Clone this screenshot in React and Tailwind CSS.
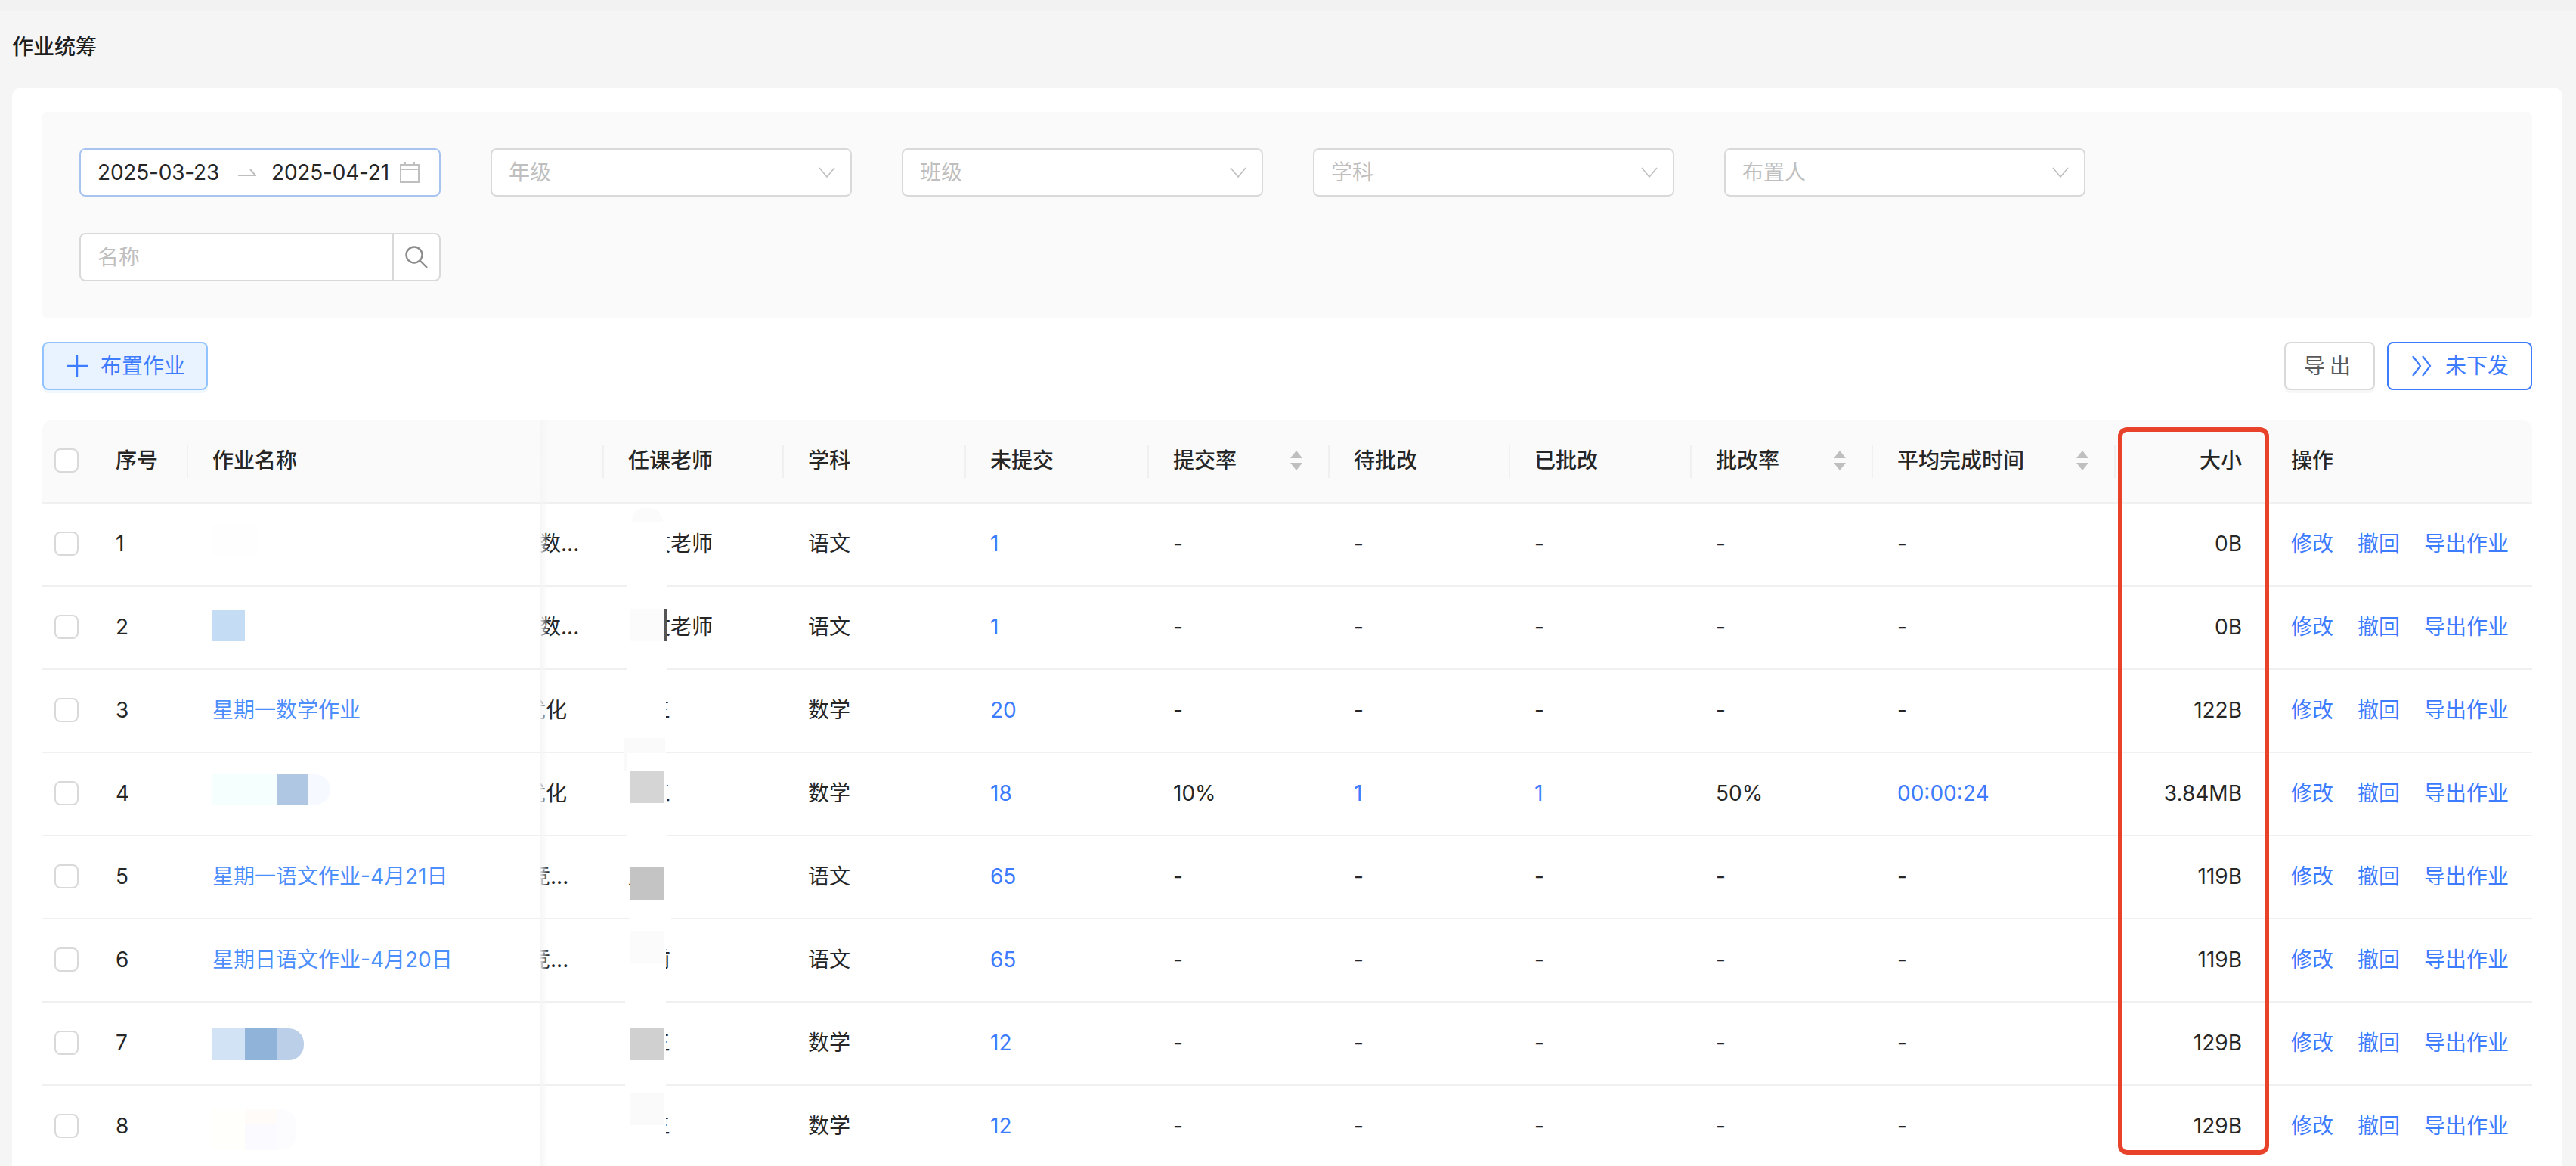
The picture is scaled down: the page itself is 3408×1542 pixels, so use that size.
import React from "react"

const gridCols =
  "grid grid-cols-[72px_119px_467px_83px_238px_241px_242px_239px_239px_240px_240px_321px_201px_352px]"

const rows = [
  { no: 1, blot: "one", subjectClip: "数...", clip: "-ml-0", teacher: "语文老师", cover: "left-[32px] w-[54px]", course: "语文", miss: "1", size: "0B" },
  { no: 2, blot: "two", subjectClip: "数...", clip: "-ml-0", teacher: "语文老师", cover: "left-[32px] w-[54px]", course: "语文", miss: "1", size: "0B" },
  { no: 3, name: "星期一数学作业", subjectClip: "优化", clip: "-ml-[20px]", teacher: "王三", cover: "left-[30px] w-[54px]", course: "数学", miss: "20", size: "122B" },
  { no: 4, blot: "four", subjectClip: "优化", clip: "-ml-[20px]", teacher: "王三", cover: "left-[32px] w-[53px]", course: "数学", miss: "18", rate: "10%", wait: "1", done: "1", fixRate: "50%", time: "00:00:24", size: "3.84MB" },
  { no: 5, name: "星期一语文作业-4月21日", subjectClip: "竞...", clip: "-ml-[14px]", teacher: "周三", cover: "left-[37px] w-[54px]", course: "语文", miss: "65", size: "119B" },
  { no: 6, name: "星期日语文作业-4月20日", subjectClip: "竞...", clip: "-ml-[14px]", teacher: "王前", cover: "left-[30px] w-[54px]", course: "语文", miss: "65", size: "119B" },
  { no: 7, blot: "seven", teacher: "王三", cover: "left-[30px] w-[54px]", course: "数学", miss: "12", size: "129B" },
  { no: 8, blot: "eight", teacher: "王三", cover: "left-[30px] w-[54px]", course: "数学", miss: "12", size: "129B" },
]

// little grey squares left over the teacher's name
const patches = {
  2: <div className="absolute top-[30px] left-[37px] h-[42px] w-[44px] bg-[#fbfbfb]" />,
  3: <div className="absolute top-[90px] left-[29px] h-[44px] w-[54px] bg-[#fafafa]" />,
  4: <div className="absolute top-[24px] left-[37px] h-[42px] w-[44px] bg-[#d5d5d5]" />,
  5: <div className="absolute top-[40px] left-[37px] h-[44px] w-[44px] bg-[#c4c4c4]" />,
  6: <div className="absolute top-[15px] left-[37px] h-[42px] w-[44px] bg-[#fbfbfb]" />,
  7: <div className="absolute top-[34px] left-[37px] h-[42px] w-[44px] bg-[#d0d0d0]" />,
  8: <div className="absolute top-[10px] left-[37px] h-[42px] w-[44px] bg-[#fafafa]" />,
}

function Blot({ kind }) {
  if (kind === "one")
    return <div className="mt-[28px] h-[40px] w-[60px] bg-[#fefefe]" />
  if (kind === "two")
    return <div className="mt-[31px] h-[41px] w-[43px] bg-[#c5dcf5]" />
  if (kind === "four")
    return (
      <div className="mt-[28px] flex h-[40px]">
        <div className="w-[85px] bg-[#f5fffd]" />
        <div className="w-[42px] bg-[#b0c7e3]" />
        <div className="w-[29px] rounded-r-[20px] bg-[#f6f9ff]" />
      </div>
    )
  if (kind === "seven")
    return (
      <div className="mt-[34px] flex h-[42px]">
        <div className="w-[43px] bg-[#d3e3f6]" />
        <div className="w-[42px] bg-[#90b3d9]" />
        <div className="w-[36px] rounded-r-[20px] bg-[#bccfe8]" />
      </div>
    )
  return (
    <div className="mt-[31px] flex h-[54px]">
      <div className="w-[43px] bg-[#fffffb]" />
      <div className="w-[42px]">
        <div className="h-[20px] bg-[#fffbf8]" />
        <div className="h-[34px] bg-[#fbfbff]" />
      </div>
      <div className="w-[26px] rounded-r-[20px] bg-[#fcfcff]" />
    </div>
  )
}

function Chevron() {
  return (
    <svg width="22" height="14" viewBox="0 0 22 14" fill="none" stroke="#bfbfbf" strokeWidth="1.6">
      <path d="M1 1l10 12L21 1" />
    </svg>
  )
}

function SelectBox({ label }) {
  return (
    <div className="flex h-16 w-[478px] items-center justify-between rounded-lg border-2 border-[#d9d9d9] bg-white pr-[20px] pl-[22px] text-[#bfbfbf]">
      <span>{label}</span>
      <Chevron />
    </div>
  )
}

function SortIcon() {
  return (
    <svg width="16" height="26" viewBox="0 0 16 26" fill="#bfbfbf" className="ml-auto">
      <path d="M8 0l8 10H0z" />
      <path d="M8 26l8-10H0z" />
    </svg>
  )
}

function HeadCell({ children, sort, end, pad = "pl-[34px]", line = true }) {
  return (
    <div className={`relative flex items-center ${pad} ${sort ? "pr-[34px]" : ""} ${end ? "justify-end pr-[32px]" : ""}`}>
      {line && <div className="absolute top-[32px] left-0 h-[44px] w-[2px] bg-[#f0f0f0]" />}
      <span>{children}</span>
      {sort && <SortIcon />}
    </div>
  )
}

function Cell({ children, color }) {
  return (
    <div className={`flex items-center pl-[34px] ${color ? "text-[#3d7bff]" : ""}`}>{children}</div>
  )
}

function Row({ r }) {
  return (
    <div className={`${gridCols} h-[110px] border-b-2 border-[#f0f0f0] pb-[2px]`}>
      <div className="flex items-center pl-4">
        <div className="h-8 w-8 rounded-lg border-2 border-[#d9d9d9] bg-white" />
      </div>
      <div className="flex items-center pl-[25px]">{r.no}</div>
      <div className="pl-[34px]">
        {r.name && <div className="flex h-full items-center text-[#4c8efb]">{r.name}</div>}
        {r.blot && <Blot kind={r.blot} />}
      </div>
      <div className="flex items-center overflow-hidden">
        <span className={`whitespace-nowrap ${r.clip || ""}`}>{r.subjectClip}</span>
      </div>
      <div className="relative flex items-center pl-[34px]">
        <span className="whitespace-nowrap">{r.teacher}</span>
        <div className={`absolute top-0 -bottom-[4px] bg-white ${r.cover}`} />
        {r.no === 1 && <div className="absolute top-[6px] left-[39px] h-[18px] w-[41px] rounded-t-full bg-[#fbfbfb]" />}
        {r.no === 2 && <div className="absolute top-[30px] left-[81px] h-[42px] w-[5px] bg-[#555555]" />}
        {patches[r.no]}
      </div>
      <Cell>{r.course}</Cell>
      <Cell color>{r.miss}</Cell>
      <Cell>{r.rate || "-"}</Cell>
      <Cell color={r.wait}>{r.wait || "-"}</Cell>
      <Cell color={r.done}>{r.done || "-"}</Cell>
      <Cell>{r.fixRate || "-"}</Cell>
      <Cell color={r.time}>{r.time || "-"}</Cell>
      <div className="flex items-center justify-end pr-[32px]">{r.size}</div>
      <div className="flex items-center gap-8 pl-[33px] text-[#3d7bff]">
        <span>修改</span>
        <span>撤回</span>
        <span>导出作业</span>
      </div>
    </div>
  )
}

const App = () => {
  return (
    <div className="relative h-[1542px] w-[3408px] overflow-hidden bg-[#f5f5f5] text-[28px] leading-[40px] text-[#262626] [font-family:Inter,'Noto_Sans_CJK_SC',sans-serif]">
      <div className="h-[14px] bg-[#f2f2f2]" />
      <div className="h-[102px] pt-[28px] pl-[16px] font-medium text-[#1f1f1f]">作业统筹</div>

      <div className="mr-[18px] ml-4 h-[1500px] rounded-t-xl bg-white px-10 pt-8">
        <div className="h-[272px] rounded-md bg-[#fafafa] py-12 pl-[49px]">
          <div className="flex gap-[66px]">
            <div className="flex h-16 w-[478px] items-center rounded-lg border-2 border-[#a8c4ee] bg-white pl-[22px] whitespace-nowrap">
              <span className="w-[186px] tracking-[-0.2px]">2025-03-23</span>
              <svg width="24" height="12" viewBox="0 0 24 12" fill="none" stroke="#bfbfbf" strokeWidth="2">
                <path d="M0 10h23L16 2" />
              </svg>
              <span className="ml-[20px] tracking-[-0.2px]">2025-04-21</span>
              <svg width="26" height="28" viewBox="0 0 26 28" fill="none" stroke="#bfbfbf" strokeWidth="2" className="ml-[14px] shrink-0">
                <path d="M1 4h24v23H1zM1 10h24M7 0v6M19 0v6" />
              </svg>
            </div>
            <SelectBox label="年级" />
            <SelectBox label="班级" />
            <SelectBox label="学科" />
            <SelectBox label="布置人" />
          </div>
          <div className="mt-12 flex h-16 w-[478px] rounded-lg border-2 border-[#d9d9d9] bg-white">
            <div className="flex-1 pl-[22px] leading-[60px] text-[#bfbfbf]">名称</div>
            <div className="flex w-[62px] items-center justify-center border-l-2 border-[#d9d9d9]">
              <svg width="30" height="30" viewBox="0 0 30 30" fill="none" stroke="#8c8c8c" strokeWidth="2.4">
                <circle cx="12" cy="12" r="10.5" />
                <path d="M20 20l9 9" />
              </svg>
            </div>
          </div>
        </div>

        <div className="mt-8 flex h-16 items-center justify-between">
          <button className="flex h-16 w-[219px] items-center gap-[17px] rounded-lg border-2 border-[#91c4ff] bg-[#e8f3ff] pl-[30px] text-[#3d7bff] shadow-[0_4px_0_#f0f7ff]">
            <svg width="28" height="28" viewBox="0 0 28 28" stroke="#3d7bff" strokeWidth="2.4">
              <path d="M14 0v28M0 14h28" />
            </svg>
            <span>布置作业</span>
          </button>
          <div className="flex gap-4">
            <button className="h-16 w-[120px] rounded-lg border-2 border-[#d9d9d9] bg-white tracking-[6px] text-[#595959] shadow-[0_4px_0_#f7f7f7]">导出</button>
            <button className="flex h-16 w-[192px] items-center gap-[17px] rounded-lg border-2 border-[#3d7bff] bg-white pl-[30px] text-[#3d7bff]">
              <svg width="28" height="28" viewBox="0 0 28 28" fill="none" stroke="#3d7bff" strokeWidth="2.2">
                <path d="M2 1l10 13L2 27M15 1l10 13-10 13" />
              </svg>
              <span>未下发</span>
            </button>
          </div>
        </div>

        <div className="relative mt-10">
          <div className={`${gridCols} h-[110px] rounded-t-xl border-b-2 border-[#f0f0f0] bg-[#fafafa] pb-[2px] font-medium`}>
            <div className="flex items-center pl-4">
              <div className="h-8 w-8 rounded-lg border-2 border-[#d9d9d9] bg-white" />
            </div>
            <div className="flex items-center pl-[25px]">序号</div>
            <HeadCell>作业名称</HeadCell>
            <div />
            <HeadCell>任课老师</HeadCell>
            <HeadCell>学科</HeadCell>
            <HeadCell>未提交</HeadCell>
            <HeadCell sort>提交率</HeadCell>
            <HeadCell>待批改</HeadCell>
            <HeadCell>已批改</HeadCell>
            <HeadCell sort>批改率</HeadCell>
            <HeadCell sort>平均完成时间</HeadCell>
            <HeadCell end pad="pl-0">大小</HeadCell>
            <HeadCell pad="pl-[33px]" line={false}>操作</HeadCell>
          </div>
          {rows.map((r) => (
            <Row key={r.no} r={r} />
          ))}
          {/* shadow of the fixed left columns */}
          <div className="absolute top-0 bottom-0 left-[658px] w-[11px] bg-gradient-to-r from-[#f5f5f5] to-transparent" />
        </div>
      </div>

      {/* red marker drawn over the size column */}
      <div className="absolute top-[565px] left-[2802px] h-[962px] w-[200px] rounded-xl border-[6px] border-[#e8432a]" />
    </div>
  )
}

export default App
